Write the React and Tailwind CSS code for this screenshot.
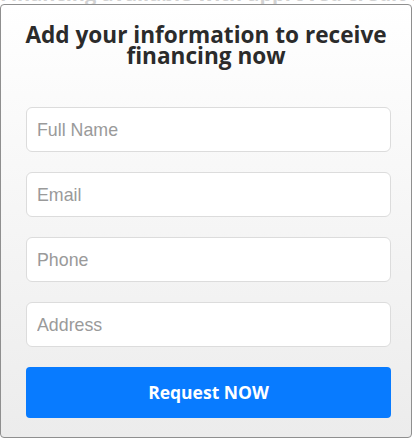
import React from "react";

const fields = ["Full Name", "Email", "Phone", "Address"];

const App = () => {
  return (
    <div className="w-[414px] h-[440px] bg-white overflow-hidden relative">
      {/* clipped text from the section above */}
      <div className="h-[4px] overflow-hidden">
        <p className="-mt-[16px] text-center text-[20px] leading-[20px] font-bold text-[#d2d2d2] whitespace-nowrap" style={{ fontFamily: "'Open Sans', sans-serif" }}>
          Financing available with approved credit for all
        </p>
      </div>
      <div className="w-[412px] h-[434px] border border-[#8f8f8f] rounded-[4px] bg-gradient-to-b from-white to-[#ececec] px-[25px] pt-[19px]">
        <h2
          className="-mx-[20px] whitespace-nowrap text-center text-[22.6px] leading-[21px] font-bold text-[#2b2b2b]"
          style={{ fontFamily: "'Open Sans', sans-serif" }}
        >
          Add your information to receive
          <br />
          financing now
        </h2>

        <div className="flex flex-col gap-[20px] mt-[41px]">
          {fields.map((f) => (
            <input
              key={f}
              type="text"
              placeholder={f}
              className="w-[365px] h-[45px] rounded-[6px] border border-[#dcdcdc] bg-white px-[10px] pt-[1px] text-[17.8px] text-[#555] placeholder:text-[#9a9a9a] outline-none"
              style={{ fontFamily: "'Liberation Sans', Arial, sans-serif" }}
            />
          ))}
        </div>

        <button
          className="mt-[20px] w-[365px] h-[51px] rounded-[4px] bg-[#087bff] text-white text-[17.5px] font-bold"
          style={{ fontFamily: "'Open Sans', sans-serif" }}
        >
          Request NOW
        </button>
      </div>
    </div>
  );
};

export default App;
